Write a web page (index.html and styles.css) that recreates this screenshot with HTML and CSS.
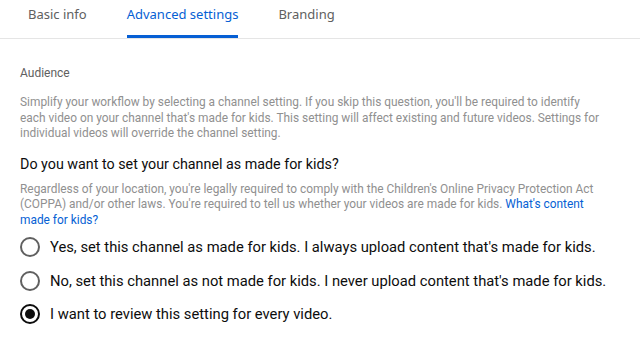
FILE: index.html
```html
<!DOCTYPE html>
<html>
<head>
<meta charset="utf-8">
<link rel="stylesheet" href="styles.css">
</head>
<body>
<nav class="tabs">
  <div class="tab">Basic info</div>
  <div class="tab active">Advanced settings</div>
  <div class="tab">Branding</div>
</nav>
<main class="content">
  <div class="label">Audience</div>
  <p class="desc">Simplify your workflow by selecting a channel setting. If you skip this question, you'll be required to identify each video on your channel that's made for kids. This setting will affect existing and future videos. Settings for individual videos will override the channel setting.</p>
  <h2 class="question">Do you want to set your channel as made for kids?</h2>
  <p class="desc">Regardless of your location, you're legally required to comply with the Children's Online Privacy Protection Act (COPPA) and/or other laws. You're required to tell us whether your videos are made for kids. <a class="link" href="#">What's content made for kids?</a></p>
  <div class="options">
    <div class="option"><span class="radio"></span><span>Yes, set this channel as made for kids. I always upload content that's made for kids.</span></div>
    <div class="option"><span class="radio"></span><span>No, set this channel as not made for kids. I never upload content that's made for kids.</span></div>
    <div class="option"><span class="radio checked"></span><span>I want to review this setting for every video.</span></div>
  </div>
</main>
</body>
</html>
```
FILE: styles.css
```css
* { box-sizing: border-box; }
body {
  margin: 0;
  background: #fff;
  font-family: Roboto, "Liberation Sans", sans-serif;
  width: 640px;
}
.tabs {
  display: flex;
  padding-left: 28px;
  gap: 40px;
  border-bottom: 1px solid #e5e5e5;
  height: 39px;
}
.tab {
  font-family: "Noto Sans", "Open Sans", sans-serif;
  font-size: 13px;
  color: #606060;
  padding-top: 5px;
  height: 38px;
  border-bottom: 3px solid transparent;
}
.tab.active {
  color: #065fd4;
  border-bottom-color: #065fd4;
}
.content {
  padding: 26px 20px 0 20px;
}
.label {
  font-size: 12px;
  color: #606060;
  line-height: 16px;
}
.desc {
  margin: 14px 0 0 0;
  font-size: 11.9px;
  line-height: 15.5px;
  color: #909090;
  padding-right: 12px;
}
.question {
  margin: 11px 0 0 0;
  font-weight: normal;
  font-size: 14.3px;
  line-height: 22px;
  color: #0d0d0d;
}
.question + .desc { margin-top: 7px; }
.link { color: #065fd4; text-decoration: none; }
.options {
  display: flex;
  flex-direction: column;
  gap: 13.5px;
  margin-top: 9px;
}
.option {
  display: flex;
  align-items: center;
  gap: 10px;
  font-size: 14.75px;
  color: #0d0d0d;
  height: 20px;
}
.radio {
  width: 20px;
  height: 20px;
  border-radius: 50%;
  border: 2px solid #606060;
  flex: none;
  position: relative;
}
.radio.checked { border-color: #0d0d0d; }
.radio.checked::after {
  content: "";
  position: absolute;
  left: 3px; top: 3px;
  width: 10px; height: 10px;
  border-radius: 50%;
  background: #0d0d0d;
}
```
